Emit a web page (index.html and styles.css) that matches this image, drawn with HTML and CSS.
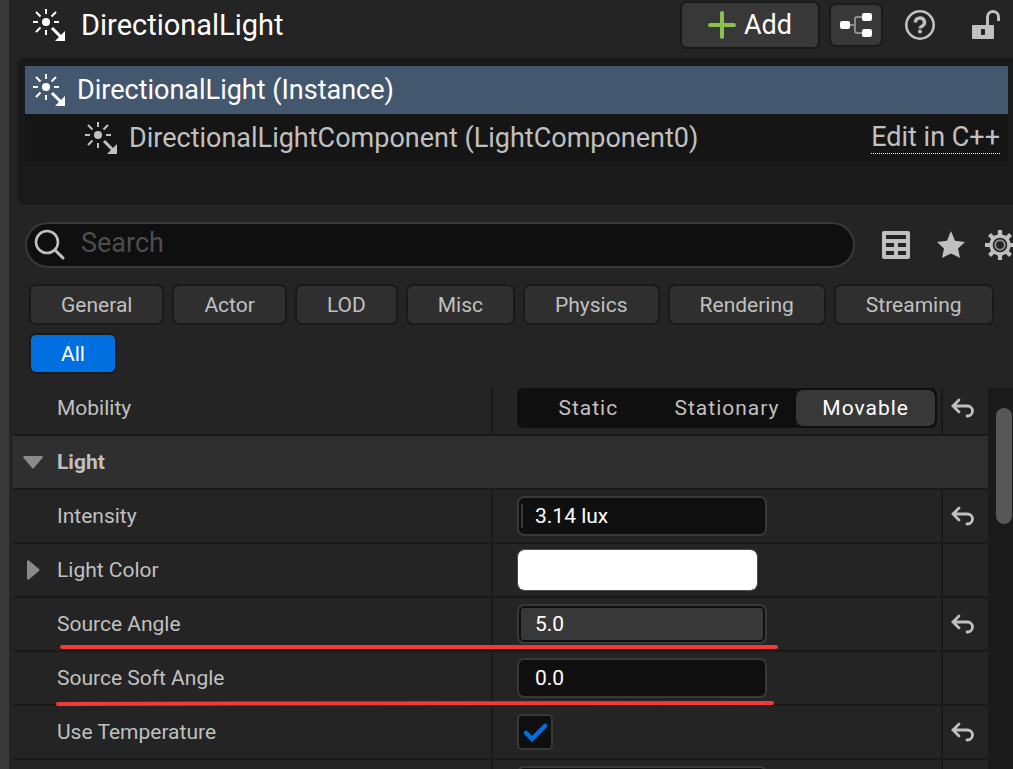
FILE: index.html
```html
<!DOCTYPE html>
<html lang="en">
<head>
  <meta charset="UTF-8">
  <meta name="viewport" content="width=device-width, initial-scale=1.0">
  <title>Details - DirectionalLight</title>
  <link rel="stylesheet" href="styles.css">
</head>
<body>
  <svg class="symbols" width="0" height="0">
    <symbol id="icon-sun" viewBox="0 0 34 34">
      <circle cx="14" cy="14" r="4" fill="currentColor"/>
      <path d="M14 1v5M14 22v5M1 14h5M22 14h5M4 4l4.500 4.500M24 4l-4.500 4.500M4 24l4.500-4.500" fill="none" stroke="currentColor" stroke-width="2"/>
      <path d="M20 20l9 9" fill="none" stroke="currentColor" stroke-width="3"/>
      <path d="M33 23v10H23z" fill="currentColor"/>
    </symbol>
    <symbol id="icon-undo" viewBox="0 0 24 20">
      <path d="M8 2L2 8l6 6M2 8h14.500a5 5 0 0 1 0 10H16" fill="none" stroke="currentColor" stroke-width="2.800" stroke-linecap="round"/>
    </symbol>
  </svg>

  <main class="panel">
    <header class="panel-header">
      <svg class="sun-icon"><use href="#icon-sun"/></svg>
      <h1>DirectionalLight</h1>
      <button class="header-button add-button">
        <svg width="28" height="28" viewBox="0 0 28 28"><path d="M14 2v24M2 14h24" stroke="#8bc34a" stroke-width="4" stroke-linecap="round"/></svg>
        Add
      </button>
      <button class="header-button graph-button" aria-label="Edit blueprint">
        <svg width="32" height="26" viewBox="0 0 32 26">
          <path d="M9 13h6M23 5h-6q-2 0-2 2v12q0 2 2 2h6" fill="none" stroke="#8c8c8c" stroke-width="2"/>
          <rect x="0" y="9" width="10" height="8" rx="2" fill="#fff"/>
          <rect x="22" y="1" width="10" height="8" rx="2" fill="#fff"/>
          <rect x="22" y="17" width="10" height="8" rx="2" fill="#fff"/>
        </svg>
      </button>
      <button class="icon-button help-button" aria-label="Help">
        <svg width="30" height="30" viewBox="0 0 30 30">
          <circle cx="15" cy="15" r="13.700" fill="none" stroke="currentColor" stroke-width="2.600"/>
          <path d="M10.500 12.500a4.500 4.200 0 1 1 6.800 3.400q-2.300 1.200-2.300 2.600" fill="none" stroke="currentColor" stroke-width="3.400"/>
          <circle cx="15" cy="21.500" r="2" fill="currentColor"/>
        </svg>
      </button>
      <button class="icon-button" aria-label="Lock">
        <svg width="28" height="30" viewBox="0 0 28 30">
          <path d="M15.500 16V7a5.500 5.500 0 0 1 11 0v4" fill="none" stroke="currentColor" stroke-width="3"/>
          <path d="M1 15h20q1 0 1 1v12q0 1-1 1H1q-1 0-1-1V16q0-1 1-1zM10 19q-1 0-1 1v4q0 1 1 1h2q1 0 1-1v-4q0-1-1-1z" fill="currentColor" fill-rule="evenodd"/>
        </svg>
      </button>
    </header>

    <section class="tree">
      <div class="tree-row selected">
        <svg class="sun-icon"><use href="#icon-sun"/></svg>
        <span>DirectionalLight (Instance)</span>
      </div>
      <div class="tree-row child">
        <svg class="sun-icon"><use href="#icon-sun"/></svg>
        <span>DirectionalLightComponent (LightComponent0)</span>
        <a href="#">Edit in C++</a>
      </div>
    </section>

    <div class="search-bar">
      <div class="search-box">
        <svg width="32" height="32" viewBox="0 0 32 32"><circle cx="13" cy="13" r="11" fill="none" stroke="currentColor" stroke-width="2.600"/><path d="M21 21l8 8" stroke="currentColor" stroke-width="3" stroke-linecap="round"/></svg>
        <input type="text" placeholder="Search" aria-label="Search">
      </div>
      <div class="search-tools">
        <button class="icon-button" aria-label="Property matrix">
          <svg width="28" height="28" viewBox="0 0 28 28"><path fill="currentColor" fill-rule="evenodd" d="M2 0h24q2 0 2 2v24q0 2-2 2H2q-2 0-2-2V2q0-2 2-2zM4 4v4h20V4zM4 12v4h8v-4zM16 12v4h8v-4zM4 20v4h8v-4zM16 20v4h8v-4z"/></svg>
        </button>
        <button class="icon-button" aria-label="Favorites">
          <svg width="28" height="28" viewBox="0 0 28 28"><path fill="currentColor" d="M14 0l4 9.700L28 11l-7 6.500L23 27l-9-4.600L5 27l2-9.500L0 11l10-1.300z"/></svg>
        </button>
        <button class="icon-button" aria-label="Settings">
          <svg width="30" height="30" viewBox="0 0 30 30">
            <circle cx="15" cy="15" r="9" fill="none" stroke="currentColor" stroke-width="3.400"/>
            <path d="M15 0v6M15 24v6M0 15h6M24 15h6M4.500 4.500l4 4M21.500 21.500l4 4M4.500 25.500l4-4M21.500 8.500l4-4" stroke="currentColor" stroke-width="4.200"/>
            <circle cx="15" cy="15" r="4.800" fill="none" stroke="#8c8c8c" stroke-width="2"/>
          </svg>
        </button>
      </div>
    </div>

    <nav class="filters">
      <button>General</button>
      <button>Actor</button>
      <button>LOD</button>
      <button>Misc</button>
      <button>Physics</button>
      <button>Rendering</button>
      <button>Streaming</button>
      <button class="active">All</button>
    </nav>

    <div class="details">
      <div class="rows">
        <div class="row">
          <div class="name">Mobility</div>
          <div class="value">
            <div class="segments" role="radiogroup" aria-label="Mobility">
              <label><input type="radio" name="mobility">Static</label>
              <label><input type="radio" name="mobility">Stationary</label>
              <label><input type="radio" name="mobility" checked>Movable</label>
            </div>
          </div>
          <div class="reset"><button class="icon-button" aria-label="Reset mobility"><svg class="undo-icon"><use href="#icon-undo"/></svg></button></div>
        </div>

        <div class="category">
          <svg width="20" height="20" viewBox="0 0 20 20"><path d="M1 4h18q1.500 1 0 2.500l-8 9.500q-1 1-2 0L1 6.500Q-.5 5 1 4z" fill="#8a8a8a"/></svg>
          <h2>Light</h2>
        </div>

        <div class="row">
          <label class="name" for="intensity">Intensity</label>
          <div class="value"><input type="text" class="field slider" id="intensity" value="3.14 lux"></div>
          <div class="reset"><button class="icon-button" aria-label="Reset intensity"><svg class="undo-icon"><use href="#icon-undo"/></svg></button></div>
        </div>

        <div class="row">
          <label class="name expandable" for="color">
            <svg width="20" height="20" viewBox="0 0 20 20"><path d="M4 1q1-1.500 2.500 0l9.500 8q1 1 0 2l-9.500 8Q5 20.500 4 19z" fill="#8a8a8a"/></svg>
            Light Color
          </label>
          <div class="value"><input type="color" class="swatch" id="color" value="#ffffff"></div>
          <div class="reset"></div>
        </div>

        <div class="row">
          <label class="name" for="angle">Source Angle</label>
          <div class="value"><input type="text" class="field filled" id="angle" value="5.0"></div>
          <div class="reset"><button class="icon-button" aria-label="Reset source angle"><svg class="undo-icon"><use href="#icon-undo"/></svg></button></div>
          <svg class="marker marker-angle" width="720" height="6"><path d="M3 3h714" stroke="#f33a3a" stroke-width="4" stroke-linecap="round"/></svg>
        </div>

        <div class="row">
          <label class="name" for="soft-angle">Source Soft Angle</label>
          <div class="value"><input type="text" class="field" id="soft-angle" value="0.0"></div>
          <div class="reset"></div>
          <svg class="marker marker-soft" width="720" height="6"><path d="M3 4l180-.5L717 3" fill="none" stroke="#f33a3a" stroke-width="4" stroke-linecap="round"/></svg>
        </div>

        <div class="row">
          <label class="name" for="use-temp">Use Temperature</label>
          <div class="value">
            <div class="check">
              <input type="checkbox" id="use-temp" checked>
              <svg width="36" height="36" viewBox="0 0 36 36"><path d="M9 19l6 6L28 12" fill="none" stroke="#0070e0" stroke-width="4.500" stroke-linecap="round"/></svg>
            </div>
          </div>
          <div class="reset"><button class="icon-button" aria-label="Reset use temperature"><svg class="undo-icon"><use href="#icon-undo"/></svg></button></div>
        </div>

        <div class="row">
          <div class="name"></div>
          <div class="value"><input type="text" class="field" aria-label="Temperature"></div>
          <div class="reset"></div>
        </div>
      </div>
      <div class="scrollbar"><div class="thumb"></div></div>
    </div>
  </main>
</body>
</html>
```

FILE: styles.css
```css
* {
  box-sizing: border-box;
  margin: 0;
  padding: 0;
}

body {
  font-family: Roboto, "Liberation Sans", sans-serif;
  font-size: 21px;
  color: #c0c0c0;
  background: #242424;
  height: 100vh;
  overflow: hidden;
}

button,
input {
  font: inherit;
  color: inherit;
}

button {
  cursor: pointer;
}

svg {
  display: block;
  flex: none;
}

.symbols {
  position: absolute;
}

.panel {
  height: 100%;
  border-left: 9px solid #383838;
  display: flex;
  flex-direction: column;
}

.icon-button {
  background: none;
  border: none;
}

.sun-icon {
  width: 34px;
  height: 34px;
}

/* header */
.panel-header {
  display: flex;
  align-items: center;
  height: 50px;
  padding: 0 13px 0 23px;
}

.panel-header .sun-icon {
  color: #fff;
}

.panel-header h1 {
  flex: 1;
  margin-left: 15px;
  font-size: 29px;
  font-weight: 400;
  color: #fff;
}

.header-button {
  display: flex;
  align-items: center;
  justify-content: center;
  background: #383838;
  border: 2px solid #1a1a1a;
  border-radius: 7px;
  color: #fff;
  font-size: 27px;
}

.add-button {
  width: 140px;
  height: 48px;
  gap: 8px;
  margin-right: 9px;
}

.graph-button {
  width: 54px;
  height: 44px;
}

.help-button {
  margin: 0 37px 0 22px;
}

/* component tree */
.tree {
  height: 147px;
  margin: 8px 0 0 8px;
  padding: 8px 5px 8px 8px;
  background: #1a1a1a;
  border-radius: 7px 0 0 7px;
}

.tree-row {
  display: flex;
  align-items: center;
  height: 48px;
  padding: 0 8px 0 7px;
  gap: 11px;
  background: #151515;
  font-size: 27px;
}

.tree-row.selected {
  background: #43586f;
  color: #fff;
}

.tree-row.child {
  padding-left: 59px;
}

.tree-row a {
  margin-left: auto;
  line-height: 31px;
  color: inherit;
  text-decoration: none;
  border-bottom: 1px dotted #fff;
}

/* search */
.search-bar {
  display: flex;
  align-items: center;
  margin: 17px 0 16px 16px;
}

.search-box {
  flex: 1;
  display: flex;
  align-items: center;
  height: 46px;
  padding: 0 7px;
  gap: 15px;
  background: #0f0f0f;
  border: 2px solid #383838;
  border-radius: 23px;
}

.search-box input {
  flex: 1;
  min-width: 0;
  height: 42px;
  padding-bottom: 4px;
  background: none;
  border: none;
  outline: none;
  font-size: 27px;
}

.search-box input::placeholder {
  color: #4d4d4d;
}

.search-tools {
  display: flex;
  align-items: center;
  gap: 27px;
  width: 131px;
  margin-left: 27px;
}

.search-tools .icon-button:last-child {
  margin-left: -7px;
}

/* filters */
.filters {
  display: flex;
  flex-wrap: wrap;
  gap: 8px;
  padding: 0 8px 0 20px;
}

.filters button {
  height: 41px;
  padding: 0 30px;
  background: #2f2f2f;
  border: 2px solid #1a1a1a;
  border-radius: 7px;
}

.filters .active {
  background: #0070e0;
  color: #fff;
}

/* property rows */
.details {
  flex: 1;
  min-height: 0;
  display: flex;
  margin-top: 14px;
  padding-left: 4px;
  overflow: hidden;
}

.rows {
  flex: 1;
  margin-top: -6px;
}

.row {
  position: relative;
  display: grid;
  grid-template-columns: 478fr 450fr 47px;
  height: 54px;
  border-bottom: 2px solid #1a1a1a;
}

.name,
.value,
.reset {
  display: flex;
  align-items: center;
}

.name {
  padding-left: 44px;
}

.name.expandable {
  padding-left: 10px;
  gap: 14px;
}

.value {
  padding-left: 24px;
  border-left: 2px solid #1a1a1a;
}

.reset {
  justify-content: center;
  padding-right: 5px;
  border-left: 2px solid #1a1a1a;
}

.undo-icon {
  width: 24px;
  height: 20px;
}

.category {
  display: flex;
  align-items: center;
  height: 54px;
  padding-left: 10px;
  gap: 14px;
  background: #2f2f2f;
  border-bottom: 2px solid #1a1a1a;
}

.category h2 {
  font-size: 21px;
  font-weight: 700;
}

.segments {
  display: grid;
  grid-template-columns: repeat(3, 1fr);
  width: 420px;
  height: 40px;
  padding: 2px;
  background: #0f0f0f;
  border-radius: 7px;
}

.segments label {
  display: flex;
  align-items: center;
  justify-content: center;
  border-radius: 7px;
  letter-spacing: 1px;
}

.segments label:has(:checked) {
  background: #383838;
  color: #fff;
}

.segments input {
  appearance: none;
}

.field {
  width: 250px;
  height: 40px;
  padding: 0 16px;
  background: #0f0f0f;
  border: 2px solid #383838;
  border-radius: 7px;
  color: #fff;
}

.field.slider {
  background: #0f0f0f linear-gradient(#383838, #383838) 2px center / 2px 24px no-repeat;
}

.field.filled {
  background: #383838;
  box-shadow: inset 0 0 0 2px #0f0f0f;
}

.swatch {
  width: 241px;
  height: 42px;
  background: none;
  border: 1px solid #4d4d4d;
  border-radius: 7px;
  overflow: hidden;
}

.swatch::-webkit-color-swatch-wrapper {
  padding: 0;
}

.swatch::-webkit-color-swatch {
  border: none;
  border-radius: 6px;
}

.check {
  display: grid;
}

.check input,
.check svg {
  grid-area: 1 / 1;
}

.check input {
  appearance: none;
  width: 36px;
  height: 36px;
  background: #0f0f0f;
  border: 2px solid #383838;
  border-radius: 5px;
}

.check svg {
  pointer-events: none;
}

/* red underlines drawn over the rows */
.marker {
  position: absolute;
}

.marker-angle {
  left: 46px;
  top: 46px;
}

.marker-soft {
  left: 42px;
  top: 48px;
}

.scrollbar {
  width: 25px;
  padding: 20px 1px 0 8px;
  background: #1a1a1a;
}

.thumb {
  height: 116px;
  background: #575757;
  border-radius: 8px;
}
```
